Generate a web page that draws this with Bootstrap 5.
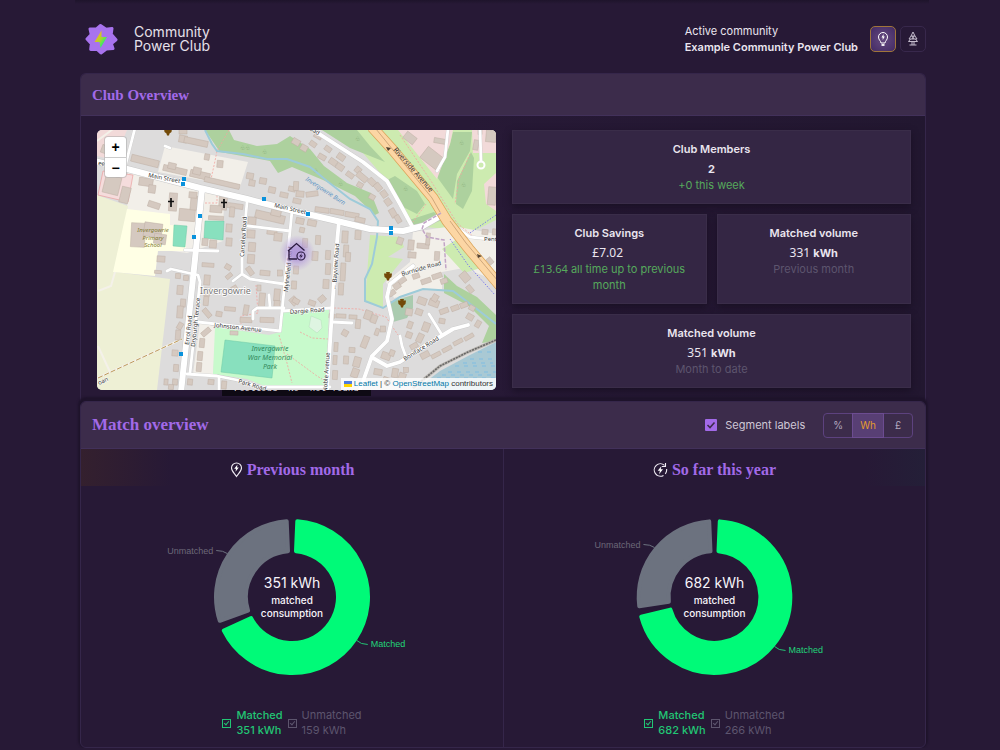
<!DOCTYPE html>
<html lang="en">
<head>
<meta charset="utf-8">
<meta name="viewport" content="width=device-width, initial-scale=1">
<title>Community Power Club</title>
<link href="https://cdn.jsdelivr.net/npm/bootstrap@5.3.0/dist/css/bootstrap.min.css" rel="stylesheet">
<style>
  :root { --violet: #a26ae8; --lime: #00fa78; --slate: #6c727f; }
  body { background: #271936; color: #eae5ef; font-family: Inter, "Noto Sans", sans-serif; font-size: 11px; line-height: 16px; }
  .shell { padding: 0 74px 0 80px; }
  .topbar { height: 73px; padding-top: 5px; }
  .top-edge { height: 4px; margin: 0 -3px -4px -5px; background: linear-gradient(#1e142b, #271936); }
  .brand { font-size: 14px; line-height: 14px; color: #e6e1ea; font-weight: 400; text-decoration: none; }
  .mode-btn { width: 26px; height: 26px; padding: 0; border: 1px solid #38284c; border-radius: 5px; color: #c4bccc; line-height: 0; }
  .mode-btn.active { border-color: #a0753a; background: radial-gradient(#664a80, #422a64); color: #fff; }
  .panel-card { --bs-card-bg: #271936; --bs-card-color: #eae5ef; --bs-card-border-color: #35264a; --bs-card-border-radius: 6px; --bs-card-cap-bg: #3c2c4b; border-radius: 6px; }
  .panel-card .card-header { padding: 0 12px 0 11px; border-bottom: 1px solid #42315a; }
  .cap-one { height: 42px; } .cap-two { height: 47px; }
  .overview-card { border-bottom: 0; border-radius: 6px 6px 0 0; }
  .match-card { box-shadow: 0 -2px 2px 2px #1e132b; }
  h2, h3 { margin: 0; color: var(--violet); font-family: "Liberation Serif", serif; font-weight: 700; }
  h2 { font-size: 15px; } .match-card h2 { font-size: 17px; } h3 { font-size: 16px; }
  .overview-body { padding: 14px 14px 11px 16px; background: linear-gradient(90deg, transparent 45%, #221730); }
  .map-box { position: relative; height: 260px; border-radius: 5px; z-index: 1; overflow: hidden; }
  .map-box svg.map { width: 100%; height: 100%; display: block; background: #dddcdc; }
  .map-col { position: relative; }
  .search-toast { position: absolute; left: 125px; bottom: -6px; padding: 0 12px 2px; background: #0e0a14; color: #d8d2dd; font: 9px/11px "DejaVu Sans Mono", monospace; white-space: nowrap; }
  .zoomer { position: absolute; left: 8px; top: 7px; width: 21px; border-radius: 3px; background: #fff; box-shadow: 0 0 0 1px #aaa8; }
  .zoomer button { width: 21px; height: 20px; padding: 0; border: 0; border-radius: 0; color: #000; font: 700 14px/18px "Liberation Sans", sans-serif; }
  .zoomer button + button { border-top: 1px solid #ccc; }
  .credit { position: absolute; right: 0; bottom: 0; padding: 0 3px; background: #ffffffd0; color: #333; font: 8px/12px "Liberation Sans", sans-serif; white-space: nowrap; }
  .credit a { color: #0078a8; text-decoration: none; }
  .credit svg { display: inline-block; vertical-align: -1px; }
  .tiles { gap: 10px; align-content: start; }
  .tile-pair { gap: 10px; }
  .tile { padding: 10px; text-align: center; background: #342644; border: 1px solid #3a2d49; box-shadow: 0 3px 7px #170e20cc; }
  .tile h4 { font-size: 11px; line-height: 16px; font-weight: 600; margin: 0 0 4px; }
  .tile p { margin: 0; }
  .tile .num { font-family: "Noto Sans", sans-serif; font-size: 12px; line-height: 16px; }
  .tile .gain .num { font-size: 11px; }
  .tile .gain { color: #56a95c; } .tile .when { color: #5d556e; }
  .seg-check { width: 12px; height: 12px; margin: 0; border: 0; border-radius: 1px; appearance: none;
    background: var(--violet) url("data:image/svg+xml,%3Csvg xmlns='http://www.w3.org/2000/svg' viewBox='0 0 12 12'%3E%3Cpath d='M2.5 6l2.5 2.5L9.5 3.5' fill='none' stroke='%233c2c4b' stroke-width='1.6'/%3E%3C/svg%3E"); }
  .seg-text { color: #cfc8d6; margin: 0 18px 0 8px; }
  .units { height: 25px; }
  .units .btn { --bs-btn-color: #b3a8bf; --bs-btn-border-color: #5d427f; --bs-btn-active-color: #e39b2e; --bs-btn-active-bg: #583f74; --bs-btn-active-border-color: #6c4c91; --bs-btn-border-radius: 4px; padding: 0 7px; font-size: 10px; line-height: 23px; min-width: 30px; }
  .pane { height: 298px; }
  .pane + .pane { border-left: 1px solid #35264a; }
  .pane-title { height: 42px; }
  .glow-l { background: linear-gradient(90deg, #34202e, transparent 90px) left top/100% 37px no-repeat; }
  .glow-r { background: linear-gradient(270deg, #241f38, transparent 60px) left top/100% 37px no-repeat; }
  .donut { display: block; width: 100%; height: 210px; }
  .legend-row { font-size: 11px; line-height: 15px; gap: 5px; padding-top: 7px; }
  .key-on { color: #22c574; } .key-off { color: #5d556e; }
  label.key-on { font-weight: 500; }
  .key-box { appearance: none; width: 9px; height: 9px; margin: 0; border: 1px solid currentColor; position: relative; }
  .key-box::after { content: ""; position: absolute; left: 2px; top: 0; width: 3px; height: 5px; border: solid currentColor; border-width: 0 1px 1px 0; transform: rotate(40deg); }
</style>
</head>
<body>
<div class="shell">
  <div class="top-edge"></div>
  <header class="topbar d-flex align-items-center justify-content-between">
    <a href="#" class="brand d-flex align-items-center">
      <svg width="34" height="34" viewBox="-2 0 34 34" class="ms-1 me-3" aria-hidden="true">
        <defs><linearGradient id="boltFill" x1="0" y1="0" x2="1" y2="1"><stop offset=".2" stop-color="#ffb01c"/><stop offset=".5" stop-color="#a8d82c"/><stop offset=".8" stop-color="#10f080"/></linearGradient></defs>
        <path d="M14.500 3.500L20 7.300l6-.8-.8 5.700L30 17.800l-4.600 3.900 1.600 4.800-6.700.6L15 31l-3.800-3.600-6.500.1.600-5.700L1 17l4.200-4.600L4 7l6.500-.2z" fill="#a873ee" stroke="#a873ee" stroke-width="3" stroke-linejoin="round"/>
        <path d="M15.500 8.500L8.500 20h5L14.500 26 21 15h-5.500z" fill="url(#boltFill)"/>
      </svg>
      <span class="d-block">Community<br>Power Club</span>
    </a>
    <div class="d-flex align-items-center">
      <div class="me-2 pe-1"><div>Active community</div><div class="fw-semibold">Example Community Power Club</div></div>
      <button class="btn mode-btn active me-1" aria-label="Energy view">
        <svg width="14" height="16" viewBox="0 0 14 16" fill="none" stroke="currentColor" stroke-width="1"><path d="M5 12C4.800 9.800 2.500 9 2.500 6a4.500 4.500 0 019 0C11.500 9 9.200 9.800 9 12z"/><path d="M5.500 14h3" stroke-width="1.800"/><path d="M7.500 3L5.500 6.500h1.200V9L8.800 5.500H7.500z" fill="currentColor" stroke="none"/></svg>
      </button>
      <button class="btn mode-btn" aria-label="Grid view">
        <svg width="14" height="16" viewBox="0 0 14 16" fill="none" stroke="currentColor" stroke-width="1"><path d="M7 1L5 5h4zM5 5L3 8h8L9 5M4.500 8l-2 2.500h9L9.500 8M6 10.500V14M8 10.500V14M3.500 14h7M6 5l2 3M8 5L6 8"/></svg>
      </button>
    </div>
  </header>

  <main>
    <section class="card panel-card overview-card">
      <div class="card-header cap-one d-flex align-items-center"><h2>Club Overview</h2></div>
      <div class="card-body overview-body">
        <div class="row gx-3">
          <div class="col-6"><div class="map-col">
            <div class="search-toast">Postcode 'No' not found</div>
            <div class="map-box">
              <svg class="map" viewBox="97 131 399 260" preserveAspectRatio="xMidYMid slice" font-family="Noto Sans, sans-serif" font-size="6" fill="#333">
                <!-- land use -->
                <g>
                  <path fill="#f2dad9" d="M97 131h30l-12 30-18-4z"/>
                  <path fill="#f2efe9" d="M165 147L248 163 240 188 158 173zM128 172l96 25-1 45-36 12-30-4-30-40zM200 323l16 5-3 49-20-2z"/>
                  <path fill="#eef0d5" d="M97 196l31 11-13 66 55 7-13 111H97z"/>
                  <path fill="#ffffe5" d="M127 210l43 5v11l16 1v25h-28l-3 25-42-4z"/>
                  <path fill="#f5dcdc" stroke="#ea9494" stroke-width=".6" d="M103 172l30 4-5 27-30-7z"/>
                  <path fill="#cdebb0" d="M322 131H496v90l-28 14-20-5-35-3-20-38-30-35z"/>
                  <path fill="#add19e" d="M205 131h24l5 10 23 6 20-2 13-8 20 13 14 17 23 17 24 10 8 20-4 2-20-19-32-16-31-13-14 6-8-12-50-9z"/>
                  <path fill="#add19e" d="M322 131h35l13 16 15 16-35-14zM385 182l10-5 22 15 8 13-8 10-14-7zM453 133h19l-2 19-13 23-4 25-16-22 13-33zM471 153l3 6-2 33-9 18-7-5 1-23zM406 222l28-9 8 8-20 8zM286 154l-8-9z"/>
                  <path fill="#f2dad9" d="M398 131h55l-3 14-13 35zM472 131h24v23h-23zM484 185l12-11v38l-10-7z"/>
                  <path fill="#f2efe9" d="M413 233l40-6 43 8v50l-12-8-20-8-22 4v17l-22 1-26 8-8-16 24-20z"/>
                  <path fill="#cdebb0" d="M370 236l30 2 4 10-16 10 15 2-20 25v23l-18-5zM442 250l18-12 24 30-20 6z"/>
                  <path fill="#add19e" d="M444 275l13 12 20 11 19 18v26l-14 2 7-17-20-20-25-13z"/>
                  <path fill="#aacbaf" d="M389 303l24-7v13l-6 10-14 4z"/>
                  <path fill="#c8facc" d="M215 328l54 8 11-3 3-20 46-3-3 79-29-2-30 1-20-8-34-5z"/>
                  <path fill="#88e0be" stroke="#6fc9a6" stroke-width=".5" d="M225 341l50 6-3 32-51-6zM174 226l13 1-2 21-12-1zM205 222h19l-1 19-19-2z"/>
                  <path fill="#dff5e2" stroke="#b5dfba" stroke-width=".5" d="M311 317l10 4 1 8-5 5-8-6z"/>
                  <path fill="#a9c9d4" d="M496 343l-28 14-28 15-25 19h81z"/>
                  <path fill="none" stroke="#6db8e8" stroke-width=".7" stroke-dasharray="4 5" d="M470 360h26M455 367h41M448 373h48M437 379h59M478 353h18M463 364h30M442 376h50"/>
                  <path fill="none" stroke="#b8b4ae" stroke-width="3" d="M496 341l-28 12-28 14-27 22"/><path fill="none" stroke="#666" stroke-width="1.500" stroke-dasharray="2 1" d="M496 341l-28 12-28 14-27 22"/>
                </g>
                <g font-size="6" fill="#7da36f"><text x="240" y="151">♧♧</text><text x="262" y="155">♧</text><text x="338" y="187">♧</text><text x="313" y="174">♧</text><text x="403" y="192">♧</text><text x="459" y="146">♧</text><text x="461" y="188">♧</text><text x="355" y="142">♧</text></g>
                <g fill="none" stroke="#f3a5a0" stroke-width=".8" stroke-dasharray="2 1.500">
                  <path d="M229 131l-12 21-2 10-4 18M205 204h12v-9M400 136l31 46 26 42 18 15M470 155l-11 25-4 25M334 309l25 1 27 8 12 18M300 333l12 6 16 1M279 336l8 28 5 20M287 355l30 22 10 6M256 286l2 28-17 3v8M426 205l-13 18"/>
                </g>
                <path d="M205 131l7 14 5 7 26 3 24 5h20l23 8 17 14 23 18 20 10 8 12-1 16-5 27-7 15v22l18 7 17-11 23-8 30 2 20 15 23 18" fill="none" stroke="#9dcbd9" stroke-width="2"/>
                <g fill="none" stroke="#f4f1e9" stroke-width="2"><path d="M98 292l13-5 4-14M98 347l12 26M97 379l85-39M97 142l16-12"/></g>
                <path d="M98 379l84-39" fill="none" stroke="#bd9a5a" stroke-dasharray="5 2"/>
                <g id="buildings" fill="#d5c9c0" stroke="#bfb0a5" stroke-width=".5"></g>
                <!-- streets: casing below, surface above -->
                <defs>
                  <g id="lanes" fill="none" stroke-linecap="round" stroke-linejoin="round">
                    <path d="M135 129l-10 39M167 272l4-2 22 5 5 1 2 7-10 91M247 203l-5 56v16l8 5 34 5M242 275l-9 7M292 212l-5 50-7 70-82-9M248 227l42 5M253 320v-8l4-3h27M270 308l-1-12M282 312l49-3M332 323l20 1M187 375l30 2 20 4 23 7h70M219 378v14M185 251l33 1M165 147l5 2M400 337l2 10 4 11M429 315l13 21M448 130l-3 28-8 14M480 130l1 32M457 229l13 9 27 3"/>
                  </g>
                  <g id="roads" fill="none" stroke-linecap="round" stroke-linejoin="round">
                    <path d="M339 222l-4 43-8 127M413 267l-23 18-3 13 5 22-5 22-15 15-12 34M373 359l14 8 13-4 23-15 30-18 15-4M310 129l53 34 24 19 13 23 13 24"/>
                  </g>
                  <g id="mains" fill="none" stroke-linejoin="round"><path d="M95 162l32 8 73 19 47 11 43 11 47 11 33 8 33 2 20-5 19-11M202 190l-7 70-7 67-7 66"/></g>
                </defs>
                <use href="#lanes" stroke="#ccc" stroke-width="3.500"/><use href="#roads" stroke="#ccc" stroke-width="4.500"/><use href="#mains" stroke="#c8c8c8" stroke-width="7"/>
                <circle cx="481" cy="166" r="3.500" fill="none" stroke="#fff" stroke-width="2"/>
                <use href="#lanes" stroke="#fff" stroke-width="2.800"/><use href="#roads" stroke="#fff" stroke-width="3.800"/><use href="#mains" stroke="#fff" stroke-width="6"/>
                <path d="M372 128l20 22 41 49 14 23 22 28 32 38" fill="none" stroke="#dba45a" stroke-width="11"/><path d="M372 128l20 22 41 49 14 23 22 28 32 38" fill="none" stroke="#fcd6a4" stroke-width="9.500"/>
                <path d="M376 130l56 69 8 14M450 222l16 22 32 38" fill="none" stroke="#c49a70" stroke-width=".8"/>
                <path d="M441 214l-17 10-2 6 5 8 17 3 2 30" fill="none" stroke="#c2a5c6" stroke-width="1.500" stroke-dasharray="4 1.500"/>
                <path d="M450 240l18 26 27 30M470 234l26-18" fill="none" stroke="#7b7bea" stroke-dasharray="1.500 1.500"/>
                <!-- labels -->
                <g stroke="#fff" stroke-width="1.200" stroke-opacity=".75" paint-order="stroke">
                  <text transform="translate(148 178) rotate(11)">Main Street</text>
                  <text transform="translate(274 208) rotate(13)">Main Street</text>
                  <text transform="translate(98 166) rotate(8)">eet</text>
                  <text transform="translate(189 346) rotate(-84)">Errol Road</text>
                  <text transform="translate(195 348) rotate(-84)">Dryburgh Terrace</text>
                  <text transform="translate(214 328) rotate(6)">Johnston Avenue</text>
                  <text transform="translate(244 258) rotate(-86)">Carselea Road</text>
                  <text transform="translate(288 293) rotate(-84)">Mylnefield Road</text>
                  <text transform="translate(336 291) rotate(-86)">← Bayview Road</text>
                  <text transform="translate(290 315) rotate(-4)">Dargie Road</text>
                  <text transform="translate(402 277) rotate(-16)">Burnside Road</text>
                  <text transform="translate(405 362) rotate(-32)">Boniface Road</text>
                  <text transform="translate(327 393) rotate(-86)">Noble Avenue</text>
                  <text transform="translate(238 384) rotate(16)">Park Road</text>
                  <text transform="translate(99 386) rotate(-25)">oan</text>
                  <text x="484" y="242">Pent</text>
                  <text transform="translate(309 131) rotate(30)">oad</text>
                </g>
                <text transform="translate(393 151) rotate(49)" font-size="7">Riverside Avenue</text>
                <text transform="translate(305 181) rotate(33)" fill="#5b94c4" font-style="italic">Invergowrie Burn</text>
                <text x="200" y="295" font-size="9" fill="#777" stroke="#fff" stroke-width="1.500" paint-order="stroke">Invergowrie</text>
                <g text-anchor="middle" font-style="italic" fill="#817a32"><text x="153" y="233">Invergowrie</text><text x="153" y="241">Primary</text><text x="153" y="248">School</text></g>
                <g text-anchor="middle" font-style="italic" font-size="7" fill="#338a5b"><text x="270" y="352">Invergowrie</text><text x="270" y="361">War Memorial</text><text x="270" y="370">Park</text></g>
                <path fill="#0a92dc" d="M182 178h4v4h-4zM181 183h4v4h-4zM262 198h4v4h-4zM198 215h4v4h-4zM192 236h4v4h-4zM306 213h4v4h-4zM389 227h4v4h-4zM389 232h4v4h-4zM179 353h4v4h-4z"/>
                <path d="M171 199v9M168 202.500h6M224 200v9M221 203.500h6" stroke="#111" stroke-width="1.700"/>
                <g fill="#734a08"><path id="urn" d="M386 273h4l-.5 1.500h2.500l-.5 3.500-2 1.500-.5 2h-2l-.5-2-2-1.500-.5-3.500h2.500z"/><use href="#urn" x="14" y="27"/><use href="#urn" x="-220" y="-145"/></g>
                <path d="M386 148l5 1-3 3zM477 255l5 2-4 2z" fill="#543"/>
                <defs><radialGradient id="halo"><stop offset=".3" stop-color="#a88ad8" stop-opacity=".8"/><stop offset="1" stop-color="#b79be0" stop-opacity="0"/></radialGradient></defs>
                <circle cx="297" cy="254" r="18" fill="url(#halo)"/>
                <path d="M297 260h-8v-8.500l-1 .5 8.500-7.500 8 7" fill="none" stroke="#2a1a40" stroke-width="1.300"/>
                <circle cx="301" cy="257" r="4" fill="#b9a2df" stroke="#2a1a40" stroke-width="1.200"/><path d="M302 254l-3 3.500h2l-1 2.500 3-3.500h-2z" fill="#2a1a40"/>
              </svg>
              <div class="zoomer"><button class="btn d-block" aria-label="Zoom in">+</button><button class="btn d-block" aria-label="Zoom out">−</button></div>
              <div class="credit"><svg width="8" height="6" aria-hidden="true"><path fill="#4c7be1" d="M0 0h8v3H0z"/><path fill="#ffd500" d="M0 3h8v3H0z"/></svg> <a href="#">Leaflet</a> | © <a href="#">OpenStreetMap</a> contributors</div>
            </div>
          </div></div>
          <div class="col-6 d-grid tiles">
            <div class="tile"><h4>Club Members</h4><p class="fw-bold">2</p><p class="gain">+0 this week</p></div>
            <div class="d-flex tile-pair">
              <div class="tile flex-fill w-50"><h4>Club Savings</h4><p class="num">£7.02&nbsp;</p><p class="gain"><span class="num">£13.64</span> all time up to previous month</p></div>
              <div class="tile flex-fill w-50"><h4>Matched volume</h4><p><span class="num">331</span> <b>kWh</b></p><p class="when">Previous month</p></div>
            </div>
            <div class="tile"><h4>Matched volume</h4><p><span class="num">351</span> <b>kWh</b></p><p class="when">Month to date</p></div>
          </div>
        </div>
      </div>
    </section>

    <section class="card panel-card match-card">
      <div class="card-header cap-two d-flex align-items-center">
        <h2 class="me-auto">Match overview</h2>
        <input type="checkbox" class="seg-check" id="seg" checked><label class="seg-text" for="seg">Segment labels</label>
        <div class="btn-group units" role="group" aria-label="Units">
          <input type="radio" class="btn-check" name="unit" id="u1"><label class="btn" for="u1">%</label>
          <input type="radio" class="btn-check" name="unit" id="u2" checked><label class="btn" for="u2">Wh</label>
          <input type="radio" class="btn-check" name="unit" id="u3"><label class="btn" for="u3">£</label>
        </div>
      </div>
      <div class="row g-0">
        <div class="col-6 pane glow-l">
          <div class="pane-title d-flex align-items-center justify-content-center">
            <svg class="me-1" width="13" height="16" viewBox="0 0 13 16" fill="none" stroke="#f2eef6" stroke-width="1.100" aria-hidden="true"><path d="M6.500 14.500C4 11 1.500 9 1.500 6a5 5 0 0110 0c0 3-2.500 5-5 8.500z"/><path d="M7.500 2.500L4.200 6.700h1.800L5.500 9.800l3.300-4.300H7z" fill="#fff" stroke="none"/></svg>
            <h3>Previous month</h3>
          </div>
          <svg class="donut" viewBox="-211 -106 422 210" data-on="351" data-off="159"></svg>
          <div class="legend-row d-flex align-items-center justify-content-center">
            <input class="key-box key-on" type="checkbox" id="k1" checked><label class="key-on" for="k1">Matched<br>351 kWh</label>
            <input class="key-box key-off" type="checkbox" id="k2" checked><label class="key-off" for="k2">Unmatched<br>159 kWh</label>
          </div>
        </div>
        <div class="col-6 pane glow-r">
          <div class="pane-title d-flex align-items-center justify-content-center">
            <svg class="me-1" width="15" height="16" viewBox="0 0 15 16" fill="none" stroke="#f2eef6" stroke-width="1.100" aria-hidden="true"><path d="M11.500 3.300A6.200 6.200 0 1010.500 13.400M12.300 11.800a6.200 6.200 0 001.300-4.800M12.500 1v3.500H9"/><path d="M8.500 4L4.700 8.700h2.200L6 12.200l4-4.900H7.700z" fill="#fff" stroke="none"/></svg>
            <h3>So far this year</h3>
          </div>
          <svg class="donut" viewBox="-211 -106 422 210" data-on="682" data-off="266"></svg>
          <div class="legend-row d-flex align-items-center justify-content-center">
            <input class="key-box key-on" type="checkbox" id="k3" checked><label class="key-on" for="k3">Matched<br>682 kWh</label>
            <input class="key-box key-off" type="checkbox" id="k4" checked><label class="key-off" for="k4">Unmatched<br>266 kWh</label>
          </div>
        </div>
      </div>
    </section>
  </main>
</div>
<script src="https://cdn.jsdelivr.net/npm/bootstrap@5.3.0/dist/js/bootstrap.bundle.min.js"></script>
<script>
  // Building footprints: centre x, centre y, width, height, rotation
  const footprints = [
    [145,162,28,7,14],[175,171,24,6,13],[172,167,8,6,13],[200,176,20,7,13],[197,172,8,7,13],[207,158,5,6,10],[220,165,6,7,5],[222,184,36,5,13],[183,140,8,7,10],[196,143,24,6,12],[183,132,8,6,0],
    [112,186,16,18,14],[125,196,9,16,14],[146,183,14,8,8],[152,190,7,8,8],[154,206,12,6,18],[173,203,8,18,4],[187,216,16,12,5],[194,204,7,14,5],[193,196,8,6,5],[223,204,8,14,5],[216,210,12,7,5],[216,219,15,4,3],
    [138,236,14,24,3],[153,231,18,14,8],[160,240,12,10,8],
    [250,177,7,6,10],[252,184,6,6,10],[263,182,7,6,10],[272,191,7,6,12],[284,196,8,5,12],[292,190,7,5,12],[297,202,8,5,12],[235,207,16,5,8],[232,213,5,10,5],[270,218,30,8,13],[276,214,10,6,13],[252,222,8,8,4],[251,235,8,8,4],[252,248,7,9,4],[251,260,7,9,4],[272,233,10,5,6],[278,238,8,8,6],[229,229,6,8,4],[229,243,6,8,4],[213,245,7,8,4],[205,243,6,7,4],[208,266,12,4,4],[195,252,3,2,0],
    [161,260,8,6,4],[158,273,7,3,4],[178,277,5,5,4],[186,279,5,5,4],[180,291,6,9,4],[183,304,5,8,4],[180,313,6,12,4],[180,327,5,7,30],[178,336,5,10,4],[175,354,6,6,4],[176,369,5,7,4],[175,383,5,6,4],[171,388,5,5,4],[166,383,4,6,4],[207,281,6,10,5],[207,293,6,8,5],[206,302,5,9,5],[207,314,5,10,-40],[206,333,10,5,-40],[202,344,5,9,5],[200,357,5,9,5],[199,368,5,9,5],[190,383,5,6,5],[211,383,6,5,5],[224,386,5,8,5],[219,315,6,5,10],[230,310,11,4,5],[246,311,5,10,10],[246,321,12,5,2],[267,321,14,5,2],[234,334,8,4,2],[228,268,6,5,30],[229,277,7,4,-40],[234,289,6,4,-30],[250,272,5,9,-35],[265,274,10,5,5],[280,274,5,6,0],[259,289,4,6,0],[262,301,6,14,5],[277,296,6,12,5],[277,305,6,7,5],[294,302,7,8,-40],
    [296,271,5,8,3],[294,286,5,8,3],[296,302,7,5,30],[312,304,7,5,20],[322,300,7,6,-40],[328,270,5,11,3],[326,285,6,9,3],[328,256,5,9,3],[343,273,5,18,3],[341,290,5,12,3],[346,252,5,12,3],[345,238,6,12,3],[312,224,9,6,12],[300,222,8,6,12],[302,231,5,5,12],[315,257,6,9,3],[318,241,5,9,3],[305,244,5,9,3],[358,236,6,9,3],[348,258,5,9,3],[296,187,5,9,3],[300,195,8,6,5],[312,195,12,5,-8],[322,211,14,5,8],[337,213,14,5,10],[352,216,14,5,10],[360,221,10,5,12],
    [296,143,8,6,30],[304,149,7,6,30],[313,145,7,5,35],[322,158,8,5,30],[328,150,7,5,35],[333,163,8,6,35],[340,168,8,6,35],[341,158,8,6,35],[350,176,8,5,35],[358,171,6,6,40],[362,178,12,6,40],[372,183,8,6,45],[378,188,8,6,50],[384,195,6,7,-35],[388,203,6,7,-35],[393,214,6,9,-30],[398,220,5,8,-30],[360,186,6,5,30],[372,198,6,5,30],[318,137,8,5,30],
    [332,317,6,4,5],[341,317,10,4,3],[353,318,8,4,3],[358,325,5,9,5],[368,316,7,9,20],[374,320,6,8,20],[345,334,6,6,30],[336,348,4,9,3],[352,351,6,5,3],[346,361,5,8,3],[357,363,7,10,15],[355,374,7,9,20],[335,361,4,9,3],[335,376,5,9,3],[365,343,6,12,22],[377,333,4,7,20],[383,330,5,6,0],[409,313,7,7,10],[419,313,7,6,20],[422,302,9,7,20],[434,304,10,7,20],[435,299,6,7,30],[442,322,6,5,10],[444,312,9,5,-20],[455,309,8,5,-20],[464,306,8,5,-20],[472,309,6,5,30],[470,318,7,6,30],[478,325,5,7,30],[469,338,10,4,-30],[458,343,10,4,-28],[447,350,10,4,-28],[436,356,10,4,-28],[425,356,9,6,-28],[426,328,7,9,20],[420,339,6,9,25],[410,326,5,7,20],[414,347,8,5,-30],[409,336,6,6,20],[386,357,9,7,20],[392,354,5,6,20],[378,373,8,6,10],[387,381,8,5,20],[395,374,6,9,10],[406,371,5,5,0],[402,378,7,8,20],[392,294,7,5,-35],[397,287,7,6,-35],[402,281,8,6,-35],[416,277,7,5,-20],[426,282,10,5,-18],[437,277,10,5,-18],[444,282,7,5,-18],
    [400,242,6,7,20],[411,246,6,10,5],[412,256,8,6,5],[423,247,12,5,5],[428,240,4,12,5],[437,257,5,9,3],[485,233,6,5,5],[495,233,5,6,5],[465,278,8,10,-40],[470,290,5,8,-40],[490,262,5,7,-40],[480,133,4,5,0],
    [432,159,20,14,38],[440,142,12,5,10],[410,139,12,8,38],[491,137,10,12,5],[492,197,8,18,5],[476,146,5,10,10],[104,150,5,8,20]
  ];
  const NS = 'http://www.w3.org/2000/svg';
  const layer = document.getElementById('buildings');
  footprints.forEach(([x, y, w, h, r]) => {
    const b = document.createElementNS(NS, 'rect');
    b.setAttribute('x', x - w / 2); b.setAttribute('y', y - h / 2);
    b.setAttribute('width', w); b.setAttribute('height', h);
    b.setAttribute('transform', `rotate(${r} ${x} ${y})`);
    layer.appendChild(b);
  });

  // Ring segments with a 5 degree gap and softly rounded corners
  const pt = (r, a) => `${(r * Math.sin(a)).toFixed(2)} ${(-r * Math.cos(a)).toFixed(2)}`;
  function segment(a, b, colour) {
    const R = 76, r = 46, gap = 2.5 * Math.PI / 180, o = gap + 2 / R, i = gap + 2 / r, big = b - a > Math.PI ? 1 : 0;
    return `<path d="M${pt(R, a + o)}A${R} ${R} 0 ${big} 1 ${pt(R, b - o)}L${pt(r, b - i)}A${r} ${r} 0 ${big} 0 ${pt(r, a + i)}z" fill="${colour}" stroke="${colour}" stroke-width="4" stroke-linejoin="round"/>`;
  }
  document.querySelectorAll('.donut').forEach(svg => {
    const on = +svg.dataset.on, off = +svg.dataset.off, full = 2 * Math.PI, cut = full * on / (on + off);
    const m = cut / 2, u = (cut + full) / 2;
    const mx = 78 * Math.sin(m), my = -78 * Math.cos(m), ux = 78 * Math.sin(u), uy = -78 * Math.cos(u);
    svg.innerHTML = segment(0, cut, '#00fa78') + segment(cut, full, '#6c727f') +
      `<path d="M${mx} ${my}q4 4 11 4" fill="none" stroke="#22c574"/><path d="M${ux} ${uy}q-4-3-11-3" fill="none" stroke="#6c727f"/>
       <g font-family="Liberation Sans, sans-serif" font-size="9"><text x="${mx + 14}" y="${my + 7}" fill="#22d57a">Matched</text><text x="${ux - 14}" y="${uy}" fill="#6c6878" text-anchor="end">Unmatched</text></g>
       <g text-anchor="middle" fill="#f7f4fa" font-weight="500"><text y="-9" font-size="14" font-weight="400">${on} kWh</text><text y="7" font-size="10">matched</text><text y="20" font-size="10">consumption</text></g>`;
  });
</script>
</body>
</html>
